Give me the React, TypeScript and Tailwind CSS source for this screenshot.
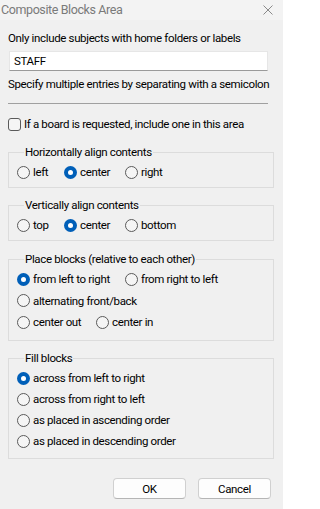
import React from "react";

function Radio({ checked, label, w }: { checked?: boolean; label: string; w?: string }) {
  return (
    <div className={`flex items-center h-[16px] ${w ?? ""}`}>
      {checked ? (
        <span className="w-[13px] h-[13px] rounded-full bg-[#005fb8] flex items-center justify-center shrink-0">
          <span className="w-[5px] h-[5px] rounded-full bg-white" />
        </span>
      ) : (
        <span className="w-[13px] h-[13px] rounded-full border border-[#5a5a5a] bg-[#f5f5f5] shrink-0" />
      )}
      <span className="ml-[3px] whitespace-nowrap">{label}</span>
    </div>
  );
}

function Group({ title, children, className }: { title: string; children: React.ReactNode; className?: string }) {
  return (
    <fieldset className={`border border-[#dcdcdc] pl-[8px] pr-[8px] ${className ?? ""}`}>
      <legend className="ml-[7px] px-[1px] leading-[16px]">{title}</legend>
      {children}
    </fieldset>
  );
}

export default function App() {
  return (
    <div className="w-[283px] h-[509px] bg-[#f0f0f0] text-[11.5px] tracking-[-0.35px] leading-[16px] text-black font-['Roboto',sans-serif] overflow-hidden">
      <div className="h-[20px] bg-[#f3f3f3] flex items-center justify-between pl-[1px] pr-[10px]">
        <span className="text-[#7a7a7a] text-[12.5px] tracking-[-0.4px]">Composite Blocks Area</span>
        <svg width="10" height="10" viewBox="0 0 10 10" className="mb-[1px]">
          <path d="M0.5 0.5 L9.5 9.5 M9.5 0.5 L0.5 9.5" stroke="#8a8a8a" strokeWidth="1" />
        </svg>
      </div>
      <div className="px-[8px]">
        <div className="mt-[10px] whitespace-nowrap">Only include subjects with home folders or labels</div>
        <div className="mt-[5px] ml-[1px] w-[259px] h-[20px] bg-white border border-[#e6e6e6] border-b-[#9a9a9a] flex items-center pl-[4px]">
          STAFF
        </div>
        <div className="mt-[5px] whitespace-nowrap">Specify multiple entries by separating with a semicolon</div>
        <div className="mt-[11px] h-px w-[260px] bg-[#a0a0a0]" />
        <div className="mt-[12px] flex items-center h-[16px]">
          <span className="w-[13px] h-[13px] rounded-[3px] border border-[#5a5a5a] bg-[#f5f5f5] shrink-0" />
          <span className="ml-[3px] whitespace-nowrap">If a board is requested, include one in this area</span>
        </div>

        <Group title="Horizontally align contents" className="mt-[12px] w-[266px] pb-[7px]">
          <div className="mt-[4px] flex">
            <Radio label="left" w="w-[47px]" />
            <Radio label="center" checked w="w-[61px]" />
            <Radio label="right" />
          </div>
        </Group>

        <Group title="Vertically align contents" className="mt-[9px] w-[266px] pb-[7px]">
          <div className="mt-[4px] flex">
            <Radio label="top" w="w-[47px]" />
            <Radio label="center" checked w="w-[61px]" />
            <Radio label="bottom" />
          </div>
        </Group>

        <Group title="Place blocks (relative to each other)" className="mt-[10px] w-[266px] pb-[10px]">
          <div className="mt-[4px] flex flex-col gap-[5.5px]">
            <div className="flex">
              <Radio label="from left to right" checked w="w-[108px]" />
              <Radio label="from right to left" />
            </div>
            <Radio label="alternating front/back" />
            <div className="flex">
              <Radio label="center out" w="w-[79px]" />
              <Radio label="center in" />
            </div>
          </div>
        </Group>

        <Group title="Fill blocks" className="mt-[9px] w-[266px] pb-[9px]">
          <div className="mt-[4px] flex flex-col gap-[5px]">
            <Radio label="across from left to right" checked />
            <Radio label="across from right to left" />
            <Radio label="as placed in ascending order" />
            <Radio label="as placed in descending order" />
          </div>
        </Group>

        <div className="mt-[19px] flex justify-end gap-[12px] pr-[4px]">
          <button className="w-[73px] h-[21px] rounded-[4px] border border-[#d0d0d0] border-b-[#b5b5b5] bg-[#fdfdfd] leading-[16px]">OK</button>
          <button className="w-[73px] h-[21px] rounded-[4px] border border-[#d0d0d0] border-b-[#b5b5b5] bg-[#fdfdfd] leading-[16px]">Cancel</button>
        </div>
      </div>
    </div>
  );
}
